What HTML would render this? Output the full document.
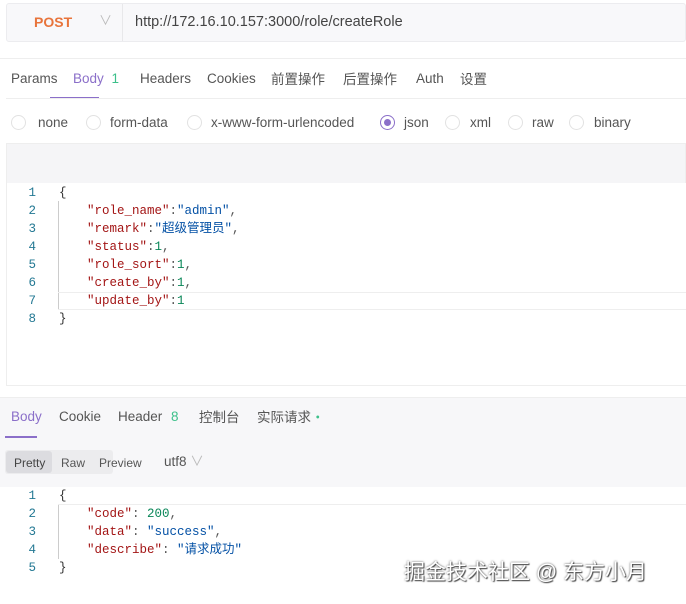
<!DOCTYPE html><html><head><meta charset="utf-8"><style>
*{margin:0;padding:0;box-sizing:border-box}
body{width:686px;height:604px;overflow:hidden;background:#fff;font-family:"Liberation Sans","Noto Sans CJK SC",sans-serif;font-size:13.5px;color:#555;position:relative}
.a{position:absolute;white-space:nowrap;line-height:18px}
.mono{font-family:"Liberation Mono","DejaVu Sans Mono","Noto Sans CJK SC",monospace;font-size:12.5px}
.k{color:#a31515}.s{color:#0451a5}.n{color:#098658}.p{color:#333}
.ln{color:#237893;width:20px;text-align:right;display:inline-block}
.r{position:absolute;top:115px;width:15px;height:15px;border:1px solid #e2e2e2;border-radius:50%}
.cn{line-height:18px;height:18px}
</style></head><body>
<div class="a" style="left:6px;top:3px;width:680px;height:39px;background:#f8f8fa;border:1px solid #ececef;border-radius:3px"></div>
<div class="a" style="left:122px;top:4px;width:1px;height:37px;background:#e8e8ea"></div>
<div class="a" style="left:34px;top:13px;color:#e8743b;font-weight:bold;font-size:14px">POST</div>
<div class="a" style="left:99px;top:12px;color:#bbb;font-size:13px">∨</div>
<div class="a" style="left:135px;top:13px;color:#444;font-size:14.5px">http://172.16.10.157:3000/role/createRole</div>
<div class="a" style="left:0;top:58px;width:686px;height:1px;background:#eee"></div>
<div class="a" style="left:11px;top:70px">Params</div>
<div class="a" style="left:73px;top:70px;color:#8b6fc9">Body <span style="color:#3cc08a;margin-left:4px">1</span></div>
<div class="a" style="left:140px;top:70px">Headers</div>
<div class="a" style="left:207px;top:70px">Cookies</div>
<div class="a" style="left:271px;top:68px;font-family:'Noto Sans CJK SC',sans-serif;line-height:20px">前置操作</div>
<div class="a" style="left:343px;top:68px;font-family:'Noto Sans CJK SC',sans-serif;line-height:20px">后置操作</div>
<div class="a" style="left:416px;top:70px">Auth</div>
<div class="a" style="left:460px;top:68px;font-family:'Noto Sans CJK SC',sans-serif;line-height:20px">设置</div>
<div class="a" style="left:50px;top:97px;width:49px;height:2px;background:#8b6fc9"></div>
<div class="a" style="left:6px;top:98px;width:680px;height:1px;background:#eee"></div>
<div class="r" style="left:11px"></div><div class="a" style="left:38px;top:114px">none</div>
<div class="r" style="left:86px"></div><div class="a" style="left:110px;top:114px">form-data</div>
<div class="r" style="left:187px"></div><div class="a" style="left:211px;top:114px">x-www-form-urlencoded</div>
<div class="a" style="left:380px;top:115px;width:15px;height:15px;border:1px solid #8b6fc9;border-radius:50%"><div style="width:7px;height:7px;margin:3px;border-radius:50%;background:#8b6fc9"></div></div>
<div class="a" style="left:404px;top:114px">json</div>
<div class="r" style="left:445px"></div><div class="a" style="left:470px;top:114px">xml</div>
<div class="r" style="left:508px"></div><div class="a" style="left:532px;top:114px">raw</div>
<div class="r" style="left:569px"></div><div class="a" style="left:594px;top:114px">binary</div>
<div class="a" style="left:6px;top:143px;width:680px;height:243px;background:#f5f5f7;border:1px solid #eee"></div>
<div class="a" style="left:7px;top:183px;width:679px;height:202px;background:#fff"></div>
<div class="a" style="left:58px;top:201px;width:1px;height:108px;background:#ccc"></div>
<div class="a" style="left:58px;top:292px;width:628px;height:18px;border-top:1px solid #eee;border-bottom:1px solid #eee"></div>
<div class="a mono" style="left:16px;top:184px">
<div class="cn"><span class="ln">1</span><span style="margin-left:23px" class="p">{</span></div>
<div class="cn"><span class="ln">2</span><span style="margin-left:51px"><span class="k">"role_name"</span>:<span class="s">"admin"</span>,</span></div>
<div class="cn"><span class="ln">3</span><span style="margin-left:51px"><span class="k">"remark"</span>:<span class="s">"超级管理员"</span>,</span></div>
<div class="cn"><span class="ln">4</span><span style="margin-left:51px"><span class="k">"status"</span>:<span class="n">1</span>,</span></div>
<div class="cn"><span class="ln">5</span><span style="margin-left:51px"><span class="k">"role_sort"</span>:<span class="n">1</span>,</span></div>
<div class="cn"><span class="ln">6</span><span style="margin-left:51px"><span class="k">"create_by"</span>:<span class="n">1</span>,</span></div>
<div class="cn"><span class="ln">7</span><span style="margin-left:51px"><span class="k">"update_by"</span>:<span class="n">1</span></span></div>
<div class="cn"><span class="ln">8</span><span style="margin-left:23px" class="p">}</span></div>
</div>
<div class="a" style="left:0;top:397px;width:686px;height:90px;background:#f7f7f9;border-top:1px solid #eee"></div>
<div class="a" style="left:11px;top:408px;color:#8b6fc9">Body</div>
<div class="a" style="left:59px;top:408px">Cookie</div>
<div class="a" style="left:118px;top:408px">Header <span style="color:#3cc08a;margin-left:5px">8</span></div>
<div class="a" style="left:199px;top:406px;font-family:'Noto Sans CJK SC',sans-serif;line-height:20px">控制台</div>
<div class="a" style="left:257px;top:406px;font-family:'Noto Sans CJK SC',sans-serif;line-height:20px">实际请求<span style="color:#3cc08a">•</span></div>
<div class="a" style="left:5px;top:436px;width:32px;height:2px;background:#8b6fc9"></div>
<div class="a" style="left:5px;top:450px;width:108px;height:24px;background:#ececee;border-radius:3px"></div>
<div class="a" style="left:6px;top:451px;width:46px;height:22px;background:#dcdce0;border-radius:3px"></div>
<div class="a" style="left:14px;top:454px;font-size:12px;color:#444">Pretty</div>
<div class="a" style="left:61px;top:454px;font-size:12px">Raw</div>
<div class="a" style="left:99px;top:454px;font-size:12px">Preview</div>
<div class="a" style="left:164px;top:453px">utf8 <span style="color:#bbb">∨</span></div>
<div class="a" style="left:58px;top:505px;width:1px;height:54px;background:#ccc"></div>
<div class="a" style="left:58px;top:487px;width:628px;height:18px;border-bottom:1px solid #eee"></div>
<div class="a mono" style="left:16px;top:487px">
<div class="cn"><span class="ln">1</span><span style="margin-left:23px" class="p">{</span></div>
<div class="cn"><span class="ln">2</span><span style="margin-left:51px"><span class="k">"code"</span>: <span class="n">200</span>,</span></div>
<div class="cn"><span class="ln">3</span><span style="margin-left:51px"><span class="k">"data"</span>: <span class="s">"success"</span>,</span></div>
<div class="cn"><span class="ln">4</span><span style="margin-left:51px"><span class="k">"describe"</span>: <span class="s">"请求成功"</span></span></div>
<div class="cn"><span class="ln">5</span><span style="margin-left:23px" class="p">}</span></div>
</div>
<div class="a" style="left:404px;top:560px;font-size:21px;line-height:26px;color:#fff;text-shadow:0 0 2px #555,1px 1px 1px #444">掘金技术社区 @ 东方小月</div>
</body></html>
